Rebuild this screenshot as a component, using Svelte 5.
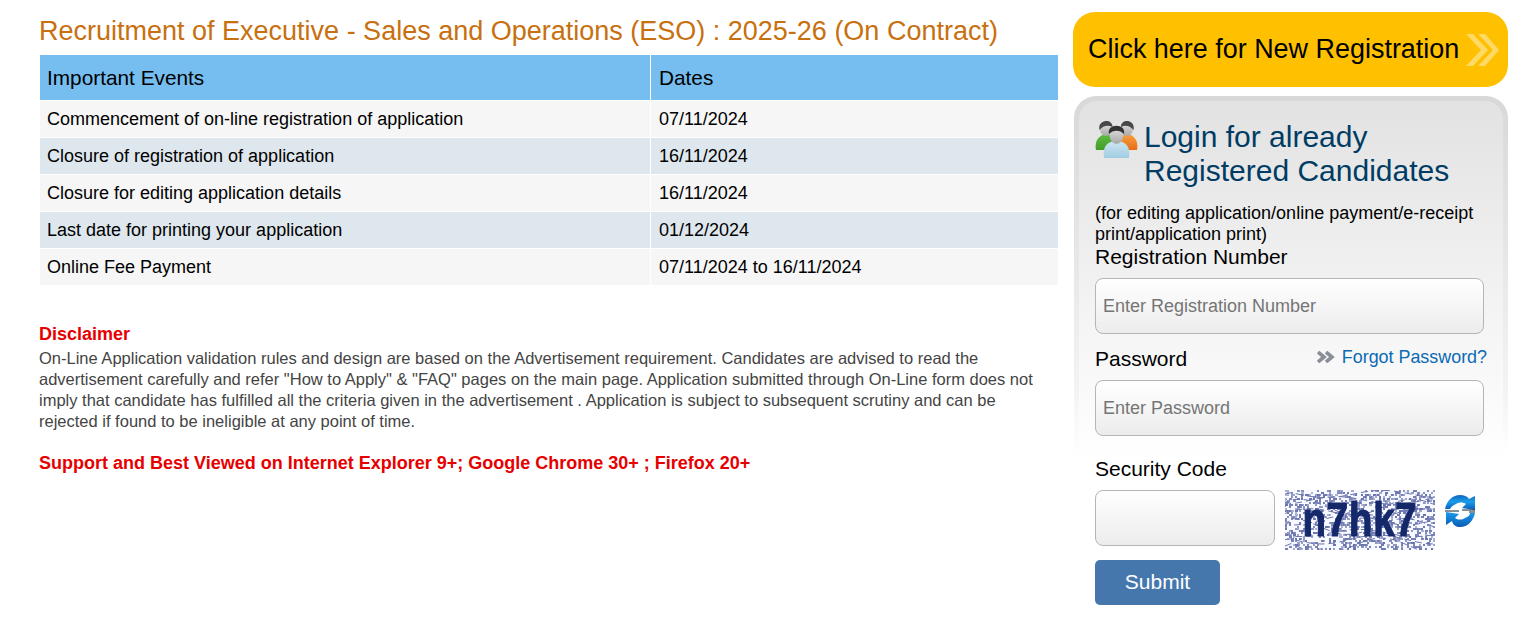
<script>
  const rows = [
    ['Commencement of on-line registration of application', '07/11/2024'],
    ['Closure of registration of application', '16/11/2024'],
    ['Closure for editing application details', '16/11/2024'],
    ['Last date for printing your application', '01/12/2024'],
    ['Online Fee Payment', '07/11/2024 to 16/11/2024']
  ];
  let seed = 17;
  const rnd = () => ((seed = (seed * 16807) % 2147483647) / 2147483647);
  const noise = [];
  for (let i = 0; i < 1050; i++) {
    noise.push({ x: Math.floor(rnd() * 75) * 2, y: Math.floor(rnd() * 30) * 2, w: rnd() > 0.7 ? 3 : 2, o: 0.5 + rnd() * 0.5 });
  }
  const waves = [];
  for (let i = 0; i < 9; i++) {
    const y = 4 + i * 6.5;
    const a = 3 + rnd() * 5;
    const b = rnd() * 6;
    let d = `M0 ${y.toFixed(1)}`;
    for (let x = 6; x <= 150; x += 6) {
      d += ` L${x} ${(y + Math.sin(x / 18 + b) * a).toFixed(1)}`;
    }
    waves.push(d);
  }
</script>

<div class="page">
  <main class="left">
    <h1>Recruitment of Executive - Sales and Operations (ESO) : 2025-26 (On Contract)</h1>
    <table>
      <thead>
        <tr><th class="c1">Important Events</th><th>Dates</th></tr>
      </thead>
      <tbody>
        {#each rows as r}
          <tr><td>{r[0]}</td><td>{r[1]}</td></tr>
        {/each}
      </tbody>
    </table>
    <h2 class="red">Disclaimer</h2>
    <p class="disc">On-Line Application validation rules and design are based on the Advertisement requirement. Candidates are advised to read the advertisement carefully and refer "How to Apply" &amp; "FAQ" pages on the main page. Application submitted through On-Line form does not imply that candidate has fulfilled all the criteria given in the advertisement . Application is subject to subsequent scrutiny and can be rejected if found to be ineligible at any point of time.</p>
    <p class="red support">Support and Best Viewed on Internet Explorer 9+; Google Chrome 30+ ; Firefox 20+</p>
  </main>

  <aside class="right">
    <div class="newreg">
      <span>Click here for New Registration</span>
      <svg width="34" height="34" viewBox="0 0 34 34" fill="#ffd966">
        <path d="M1 1 H8 L23 17 L8 33 H1 L16 17 Z" />
        <path d="M13 1 H20 L34 17 L20 33 H13 L28 17 Z" />
      </svg>
    </div>

    <div class="panel">
      <div class="inner">
        <div class="head">
          <svg class="people" width="50" height="44" viewBox="0 0 50 44">
            <defs>
              <linearGradient id="bl" x1="0" y1="0" x2="0" y2="1"><stop offset="0" stop-color="#cfe6f1" /><stop offset="1" stop-color="#a0cde3" /></linearGradient>
              <linearGradient id="gr" x1="0" y1="0" x2="0" y2="1"><stop offset="0" stop-color="#5fbd40" /><stop offset="1" stop-color="#429c2a" /></linearGradient>
              <linearGradient id="or" x1="0" y1="0" x2="0" y2="1"><stop offset="0" stop-color="#f8a040" /><stop offset="1" stop-color="#e66e18" /></linearGradient>
              <linearGradient id="fc" x1="0" y1="0" x2="0" y2="1"><stop offset="0" stop-color="#e4e4e4" /><stop offset="1" stop-color="#a8a8a8" /></linearGradient>
            </defs>
            <path d="M4 34 C2 24 8 18 16 18 C23 18 26 24 26 34 Z" fill="url(#gr)" />
            <path d="M45 34 C47 24 41 18 34 18 C27 18 24 24 24 34 Z" fill="url(#or)" />
            <ellipse cx="14" cy="13" rx="6" ry="7" fill="url(#fc)" />
            <path d="M7.500 14 C5 3 21 2 20.500 11 C16 8.500 11 9.500 7.500 14 Z" fill="#484848" />
            <ellipse cx="35" cy="13" rx="6" ry="7" fill="url(#fc)" />
            <path d="M29 11 C28.500 2 44 3 41.500 14 C38 9.500 33 8.500 29 11 Z" fill="#484848" />
            <path d="M12 42 C10 30 16 25 24.500 25 C33 25 39 30 37 42 Z" fill="url(#bl)" />
            <ellipse cx="24.500" cy="19" rx="7" ry="9" fill="url(#fc)" />
            <path d="M17 18 C14.500 7 34.500 7 32 18 C28 13.500 21 13.500 17 18 Z" fill="#333" />
          </svg>
          <h2 class="logintitle">Login for already<br />Registered Candidates</h2>
        </div>
        <p class="note">(for editing application/online payment/e-receipt print/application print)</p>
        <label class="lbl" for="reg">Registration Number</label>
        <input id="reg" class="field" placeholder="Enter Registration Number" />
        <div class="pwrow">
          <label class="lbl" for="pw">Password</label>
          <a class="forgot" href="#top">
            <svg width="18" height="12" viewBox="0 0 18 12" fill="none" stroke="#8a8f96" stroke-width="3.600">
              <path d="M1 1 L7 6 L1 11" /><path d="M9 1 L15 6 L9 11" />
            </svg>
            Forgot Password?
          </a>
        </div>
        <input id="pw" class="field" placeholder="Enter Password" />
        <label class="lbl sec" for="code">Security Code</label>
        <div class="coderow">
          <input id="code" class="field code" />
          <div class="captcha">
            <svg class="noise" width="150" height="60" viewBox="0 0 150 60">
              <rect width="150" height="60" fill="#f8f9fe" />
              {#each noise as n}
                <rect x={n.x} y={n.y} width={n.w} height="2" fill="#6a75ad" opacity={n.o} />
              {/each}
              {#each waves as d}
                <path {d} fill="none" stroke="#6a75ad" stroke-width="1" stroke-dasharray="7 4" />
              {/each}
            </svg>
            <span>n7hk7</span>
          </div>
          <svg class="refresh" width="34" height="34" viewBox="4 4 34 34">
            <defs>
              <linearGradient id="rf1" x1="0" y1="0" x2="0" y2="1"><stop offset="0" stop-color="#0c66bc" /><stop offset="0.45" stop-color="#1c9ce8" /><stop offset="1" stop-color="#0a5cb8" /></linearGradient>
              <linearGradient id="rf2" x1="0" y1="0" x2="0" y2="1"><stop offset="0" stop-color="#1c9ce8" /><stop offset="1" stop-color="#0a5cb8" /></linearGradient>
            </defs>
            <path d="M5 19 C7 10 13 5 20 5 C24 5 27 6 29 9 L35 6 V20 L22 18 L26 14 C23 12 19 12 16 14 C13 15 11 17 10 19 Z" fill="url(#rf1)" />
            <path d="M35 23 C33 31 28 37 20 37 C16 37 13 35 12 31 L6 35 V22 L19 24 L15 28 C18 30 22 30 25 28 C28 27 30 25 30 23 Z" fill="url(#rf2)" />
            <path d="M5 21 H19 M22 20 H35 M29 22 H35" stroke="#10222e" stroke-width="1" />
          </svg>
        </div>
        <button class="submit" type="button">Submit</button>
      </div>
    </div>
  </aside>
</div>

<style>
  :global(body) {
    margin: 0;
    background: #fff;
    font-family: "Liberation Sans", Arial, sans-serif;
  }
  .page {
    display: flex;
    align-items: flex-start;
    width: 1518px;
    height: 641px;
    overflow: hidden;
    box-sizing: border-box;
    padding: 12px 10px 0 39px;
    gap: 14px;
  }
  .left {
    width: 1020px;
    flex: none;
  }
  h1 {
    margin: 3px 0 8px;
    font-size: 27px;
    line-height: 32px;
    font-weight: 400;
    color: #c8700f;
    white-space: nowrap;
  }
  table {
    width: 1020px;
    border-collapse: collapse;
    table-layout: fixed;
  }
  th, td {
    padding: 0 0 0 7px;
    text-align: left;
    color: #000;
    border: solid #fff;
    border-width: 0 1px 1px 1px;
  }
  th:last-child, td:last-child {
    padding-left: 8px;
  }
  th {
    height: 45px;
    padding-top: 1px;
    box-sizing: border-box;
    font-size: 20.800px;
    font-weight: 400;
    background: #76bef0;
  }
  .c1 {
    width: 611px;
    box-sizing: border-box;
  }
  td {
    height: 35px;
    padding-top: 1px;
    font-size: 18px;
  }
  tbody tr:nth-child(odd) td {
    background: #f6f6f6;
  }
  tbody tr:nth-child(even) td {
    background: #dfe7ee;
  }
  .red {
    color: #e60000;
    font-weight: 700;
  }
  h2.red {
    margin: 37px 0 0;
    font-size: 18px;
    line-height: 22px;
  }
  .disc {
    margin: 3px 0 0;
    font-size: 16.500px;
    line-height: 21px;
    color: #444;
    width: 1010px;
  }
  .support {
    margin: 20px 0 0;
    font-size: 18px;
    line-height: 22px;
  }
  .right {
    width: 435px;
    flex: none;
    display: flex;
    flex-direction: column;
    gap: 9px;
  }
  .newreg {
    height: 75px;
    box-sizing: border-box;
    border-radius: 22px;
    background: #ffc000;
    display: flex;
    align-items: center;
    padding: 0 9px 0 15px;
    justify-content: space-between;
    font-size: 26.950px;
    color: #000;
    white-space: nowrap;
  }
  .panel {
    margin-left: 1px;
    padding: 5px 5px 0;
    border-radius: 22px 22px 0 0;
    background: linear-gradient(#d8d8d8, #f4f4f4 300px, #fff 360px);
  }
  .inner {
    height: 500px;
    box-sizing: border-box;
    padding: 19px 20px 0 16px;
    border-radius: 18px 18px 0 0;
    background: linear-gradient(#e2e2e2, #f2f2f2 190px, #fff 360px);
  }
  .head {
    display: flex;
    gap: 2px;
    align-items: flex-start;
  }
  .people {
    flex: none;
    margin: -4px 0 -6px -3px;
    filter: blur(0.6px);
  }
  .logintitle {
    margin: 0;
    font-size: 30px;
    font-weight: 400;
    line-height: 34px;
    color: #003c64;
    white-space: nowrap;
  }
  .note {
    margin: 15px 0 0;
    font-size: 18px;
    line-height: 21px;
    color: #000;
  }
  .lbl {
    display: block;
    font-size: 21px;
    line-height: 24px;
    color: #000;
  }
  .field {
    display: block;
    width: 389px;
    height: 56px;
    box-sizing: border-box;
    margin-top: 9px;
    padding: 0 7px;
    border: 1px solid #b5b5b5;
    border-radius: 8px;
    font: 18px "Liberation Sans", Arial, sans-serif;
    background: linear-gradient(#fff, #ececec);
  }
  .field::placeholder {
    color: #757575;
    opacity: 1;
  }
  .pwrow {
    display: flex;
    justify-content: space-between;
    align-items: center;
    margin-top: 13px;
    margin-right: -4px;
    height: 24px;
  }
  .pwrow + .field {
    margin-top: 9px;
  }
  .forgot {
    font-size: 17.900px;
    color: #0a6ab4;
    text-decoration: none;
    display: flex;
    align-items: center;
    gap: 7px;
    position: relative;
    top: -2px;
  }
  .sec {
    margin-top: 21px;
  }
  .coderow {
    display: flex;
    align-items: flex-start;
    margin-top: 9px;
  }
  .coderow .code {
    width: 180px;
    margin: 0 10px 0 0;
  }
  .captcha {
    position: relative;
    width: 150px;
    height: 60px;
    flex: none;
  }
  .noise {
    display: block;
    filter: blur(0.4px);
  }
  .captcha span {
    position: absolute;
    inset: 0;
    text-align: center;
    font: 700 48px/60px "Liberation Sans", Arial, sans-serif;
    letter-spacing: 1px;
    color: #14286a;
    transform: scaleX(0.8);
    -webkit-text-stroke: 1.200px #14286a;
    filter: blur(0.4px);
  }
  .refresh {
    margin-left: 9px;
    margin-top: 4px;
    filter: blur(0.2px);
  }
  .submit {
    display: block;
    margin-top: 10px;
    width: 125px;
    height: 45px;
    padding: 0 0 2px;
    border: 0;
    border-radius: 5px;
    background: #4577ad;
    color: #fff;
    font: 21px "Liberation Sans", Arial, sans-serif;
  }
</style>
